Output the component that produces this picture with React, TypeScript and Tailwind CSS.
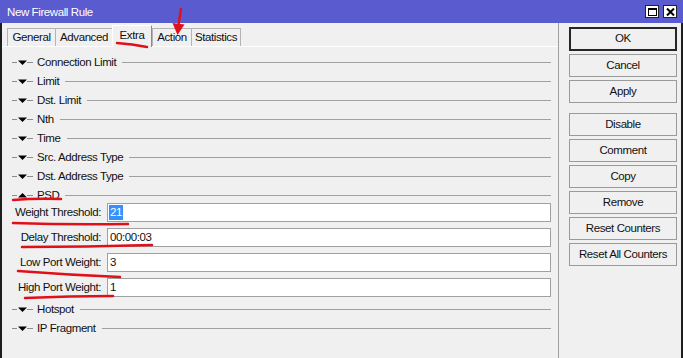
import React from "react";

const collapsed = [
  "Connection Limit",
  "Limit",
  "Dst. Limit",
  "Nth",
  "Time",
  "Src. Address Type",
  "Dst. Address Type",
];

const fields = [
  { label: "Weight Threshold:", value: "21", selected: true },
  { label: "Delay Threshold:", value: "00:00:03" },
  { label: "Low Port Weight:", value: "3" },
  { label: "High Port Weight:", value: "1" },
];

const tabs = [
  { name: "General", w: "w-[49px]" },
  { name: "Advanced", w: "w-[58px]" },
  { name: "Extra", w: "w-[40px]", active: true },
  { name: "Action", w: "w-[40px]" },
  { name: "Statistics", w: "w-[50px]" },
];

function Toggle({ up }: { up?: boolean }) {
  return (
    <svg width="24" height="9" viewBox="0 0 24 9" className="shrink-0">
      <line x1="0" y1="4.5" x2="5" y2="4.5" stroke="#8c8c8c" />
      <path d={up ? "M6 6.5 L15 6.5 L10.5 2 Z" : "M6 2.5 L15 2.5 L10.5 7 Z"} fill="#000" />
      <line x1="15" y1="4.5" x2="21" y2="4.5" stroke="#8c8c8c" />
    </svg>
  );
}

function Section({ title, up }: { title: string; up?: boolean }) {
  return (
    <div className="flex items-center h-[19px] pl-[10px] pr-[7px]">
      <Toggle up={up} />
      <span className="ml-[1px] whitespace-nowrap">{title}</span>
      <div className="flex-1 h-px bg-[#a0a0a0] ml-[6px]" />
    </div>
  );
}

function Btn({ children, main }: { children: React.ReactNode; main?: boolean }) {
  return (
    <div
      className={
        main
          ? "w-[108px] h-[24px] flex items-center justify-center border-2 border-[#262626] bg-[#f0f0f0]"
          : "w-[108px] h-[23px] flex items-center justify-center border border-[#9a9a9a] bg-[#f0f0f0]"
      }
    >
      {children}
    </div>
  );
}

export default function App() {
  return (
    <div className="relative w-[683px] h-[358px] overflow-hidden bg-[#f0f0f0] text-[11.5px] tracking-[-0.4px] text-[#111] font-['Liberation_Sans',Arial,sans-serif]">
      {/* title bar */}
      <div className="h-[23px] bg-[#5b5bd0] flex items-center pl-[7px] pr-[6px] pt-[3px] text-white">
        <span className="flex-1">New Firewall Rule</span>
        <div className="flex gap-[4px] -mt-[3px]">
          <div className="w-[14px] h-[13px] bg-white border border-[#222] flex items-center justify-center">
            <div className="w-[9px] h-[8px] border border-black border-t-2" />
          </div>
          <div className="w-[14px] h-[13px] bg-white border border-[#222] flex items-center justify-center">
            <svg width="9" height="8" viewBox="0 0 9 8">
              <path d="M1 0.5 L8 7.5 M8 0.5 L1 7.5" stroke="#000" strokeWidth="2" />
            </svg>
          </div>
        </div>
      </div>

      <div className="flex h-[335px] border-l-2 border-r-2 border-[#1e1e1e]">
        {/* left side */}
        <div className="w-[557px] flex flex-col border-r border-[#a0a0a0]">
          <div className="h-[23px] flex items-end pl-[5px]">
            {tabs.map((t) =>
              t.active ? (
                <div
                  key={t.name}
                  className={`${t.w} h-[22px] -mb-px z-10 flex items-center justify-center bg-[#f0f0f0] border-t border-l border-white border-r border-r-[#8a8a8a] pb-[2px]`}
                >
                  {t.name}
                </div>
              ) : (
                <div
                  key={t.name}
                  className={`${t.w} h-[18px] flex items-center justify-center bg-[#f0f0f0] border-t border-l border-r border-[#b4b4b4] -mr-px`}
                >
                  {t.name}
                </div>
              )
            )}
          </div>
          <div className="flex-1 border-t border-white pt-[6px]">
            {collapsed.map((s) => (
              <Section key={s} title={s} />
            ))}
            <Section title="PSD" up />
            <div className="flex flex-col gap-[6px] -mt-[2px]">
              {fields.map((f) => (
                <div key={f.label} className="flex items-center">
                  <span className="w-[99px] text-right whitespace-nowrap">{f.label}</span>
                  <div className="ml-[6px] mr-[7px] flex-1 h-[19px] bg-white border border-[#a0a0a0] flex items-center pl-[1px]">
                    {f.selected ? (
                      <span className="bg-[#3390ff] text-white px-[1px] leading-[15px]">{f.value}</span>
                    ) : (
                      <span className="px-[1px]">{f.value}</span>
                    )}
                  </div>
                </div>
              ))}
            </div>
            <div className="mt-[3px]">
              <Section title="Hotspot" />
              <Section title="IP Fragment" />
            </div>
          </div>
        </div>

        {/* right side buttons */}
        <div className="flex-1 pl-[10px] pt-[4px] flex flex-col gap-[3px]">
          <Btn main>OK</Btn>
          <Btn>Cancel</Btn>
          <Btn>Apply</Btn>
          <div className="mt-[7px]">
            <Btn>Disable</Btn>
          </div>
          <Btn>Comment</Btn>
          <Btn>Copy</Btn>
          <Btn>Remove</Btn>
          <Btn>Reset Counters</Btn>
          <Btn>Reset All Counters</Btn>
        </div>
      </div>

      {/* red hand-drawn annotations */}
      <svg className="absolute inset-0 z-20 pointer-events-none" width="683" height="358" viewBox="0 0 683 358">
        <g stroke="#e0101a" strokeWidth="2.5" strokeLinecap="round" fill="none">
          <path d="M117 43 Q132 44 147 47" />
          <path d="M181 9 L178 28" />
          <path d="M13 200 Q36 198 61 199" />
          <path d="M13 223 Q70 225 128 224" />
          <path d="M22 247 Q86 247 152 245" />
          <path d="M18 271 Q70 275 120 277" />
          <path d="M25 298 Q70 296 113 296" />
        </g>
        <path d="M172.5 23 L184.5 24.5 L177.5 35 Z" fill="#e0101a" />
      </svg>
    </div>
  );
}
